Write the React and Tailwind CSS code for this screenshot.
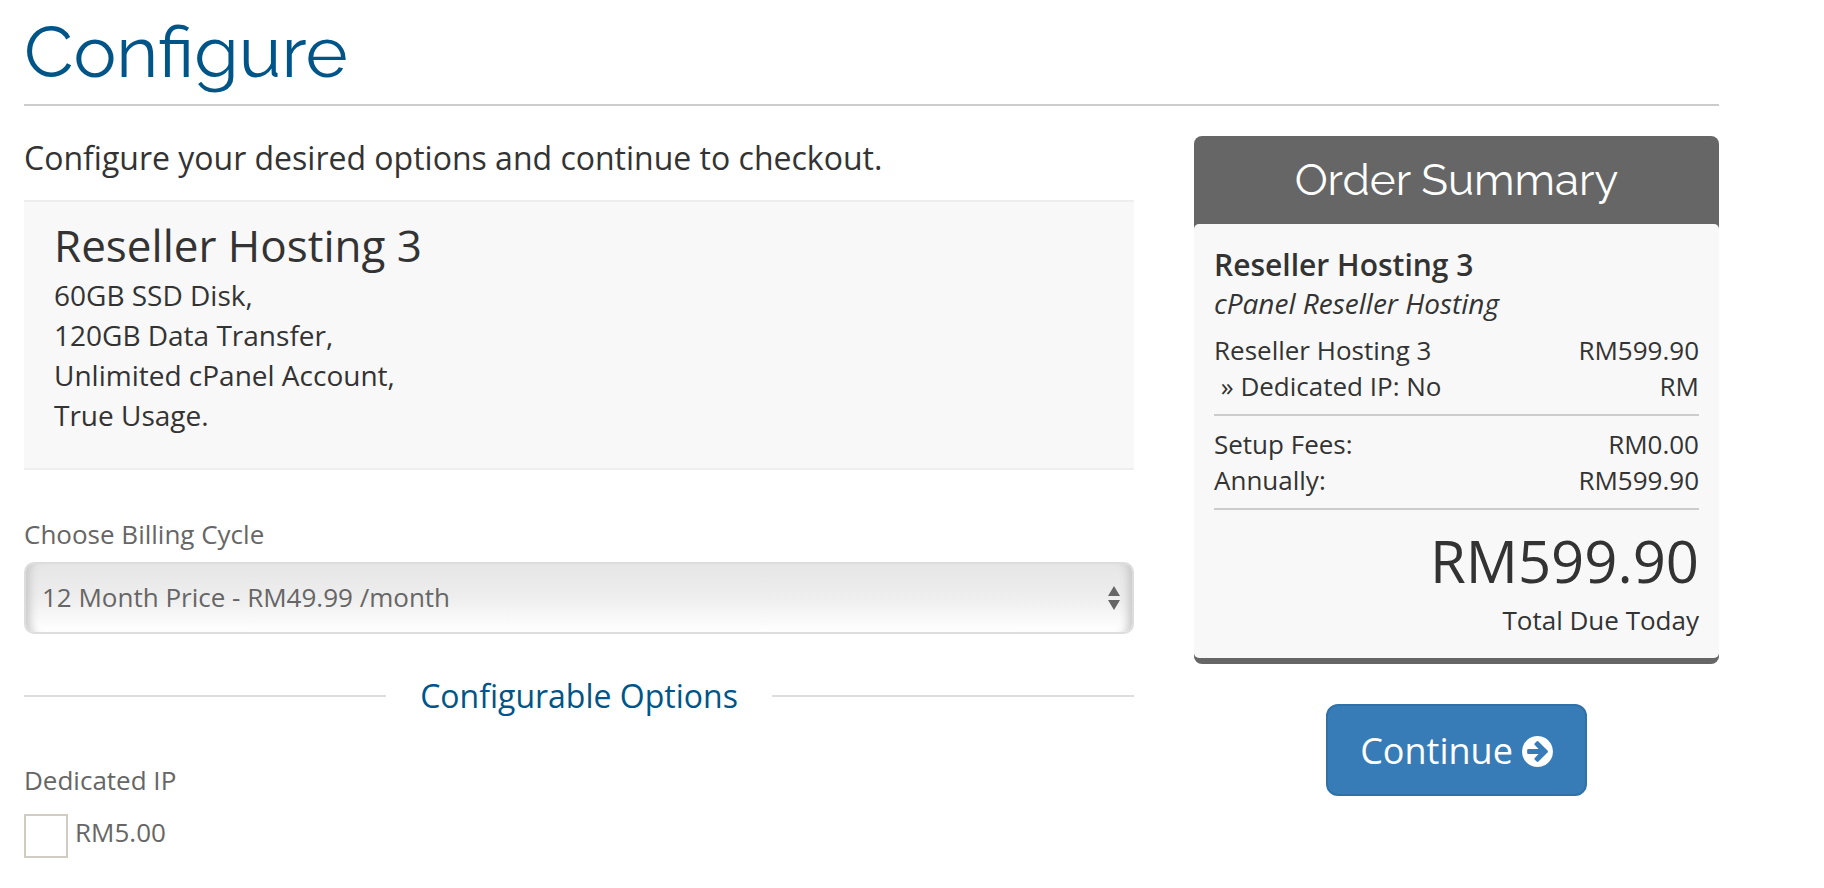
const features = ["60GB SSD Disk,", "120GB Data Transfer,", "Unlimited cPanel Account,", "True Usage."];

const items = [
  { label: "Reseller Hosting 3", price: "RM599.90" },
  { label: "\u00a0» Dedicated IP: No", price: "RM" },
];

const fees = [
  { label: "Setup Fees:", price: "RM0.00" },
  { label: "Annually:", price: "RM599.90" },
];

function ArrowCircle() {
  return (
    <svg viewBox="0 0 1536 1536" className="size-[31px] fill-current" fillRule="evenodd" aria-hidden="true">
      <path d="M1285 767q0-27-18-45l-91-91-362-362q-18-18-45-18t-45 18l-91 91q-18 18-18 45t18 45l189 189h-502q-26 0-45 19t-19 45v128q0 26 19 45t45 19h502l-189 189q-19 19-19 45t19 45l91 91q18 18 45 18t45-18l362-362 91-91q18-18 18-45zm251 1q0 209-103 385.500t-279.500 279.500-385.500 103-385.500-103-279.500-279.500-103-385.500 103-385.500 279.500-279.500 385.500-103 385.500 103 279.500 279.500 103 385.500z" />
    </svg>
  );
}

function PriceList({ rows }) {
  return (
    <dl className="border-b-2 border-[#ccc] py-[10px] text-[26px] leading-9">
      {rows.map((row) => (
        <div key={row.label} className="flex justify-between">
          <dt>{row.label}</dt>
          <dd>{row.price}</dd>
        </div>
      ))}
    </dl>
  );
}

function ProductForm() {
  return (
    <section>
      <p className="text-[32px] leading-[44px]">Configure your desired options and continue to checkout.</p>

      <div className="mt-5 border-y-2 border-[#eee] bg-[#f8f8f8] px-[30px] pt-[18px] pb-[33px]">
        <h2 className="text-[44px] leading-[50px]">Reseller Hosting 3</h2>
        <ul className="mt-[5px] text-[28px] leading-10">
          {features.map((feature) => (
            <li key={feature}>{feature}</li>
          ))}
        </ul>
      </div>

      <label htmlFor="cycle" className="mt-[46px] block text-[26px] leading-9 text-[#666]">
        Choose Billing Cycle
      </label>
      <div className="relative mt-[10px]">
        <select
          id="cycle"
          className="block h-[72px] w-full appearance-none rounded-[10px] border-2 border-[#ddd] bg-linear-to-b from-[#e6e6e6] via-[#eee] to-white pr-12 pb-[2px] pl-4 text-[26px] text-[#666] shadow-[inset_12px_0_8px_-8px_#c8c8c8,inset_-12px_0_8px_-8px_#c8c8c8]"
        >
          <option>12 Month Price - RM49.99 /month</option>
        </select>
        <svg viewBox="0 0 12 24" className="pointer-events-none absolute top-6 right-[14px] h-6 w-3 fill-[#666]" aria-hidden="true">
          <path d="M6 0 12 10H0ZM0 14H12L6 24Z" />
        </svg>
      </div>

      <div className="mt-10 flex items-center gap-[34px]">
        <span className="h-[2px] flex-1 bg-[#ddd]" />
        <h3 className="text-[32px] leading-[44px] text-[#058]">Configurable Options</h3>
        <span className="h-[2px] flex-1 bg-[#ddd]" />
      </div>

      <fieldset className="mt-11 text-[26px] leading-9 text-[#666]">
        <legend>Dedicated IP</legend>
        <label className="mt-4 flex items-start gap-[7px]">
          <input type="checkbox" className="size-11 appearance-none border-2 border-[#d0ccc4] bg-white checked:bg-[#337ab7]" />
          RM5.00
        </label>
      </fieldset>
    </section>
  );
}

function OrderSummary() {
  return (
    <aside>
      <div className="rounded-[8px] border-b-[6px] border-[#666] bg-[#666]">
        <h2 className="pt-4 pb-4 text-center font-['Raleway','Lato',sans-serif] text-[44px] leading-[56px] text-white">
          Order Summary
        </h2>
        <div className="rounded-[5px] bg-[#f8f8f8] px-5 pt-[21px] pb-5">
          <h3 className="text-[30px] leading-10 font-semibold">Reseller Hosting 3</h3>
          <p className="mb-px text-[28px] leading-9 italic">cPanel Reseller Hosting</p>
          <PriceList rows={items} />
          <PriceList rows={fees} />
          <div className="pt-[10px] text-right">
            <p className="text-[58px] leading-[82px]">RM599.90</p>
            <p className="text-[26px] leading-9">Total Due Today</p>
          </div>
        </div>
      </div>
      <div className="mt-10 text-center">
        <button
          type="button"
          className="inline-flex h-[92px] items-center gap-[9px] rounded-[12px] border-2 border-[#2f71a9] bg-[#377cb6] px-8 pt-[2px] text-[36px] text-white"
        >
          Continue
          <ArrowCircle />
        </button>
      </div>
    </aside>
  );
}

export default function App() {
  return (
    <main className="bg-white pt-3 pr-[105px] pb-[30px] pl-6 font-['Open_Sans',sans-serif] text-[#333]">
      <header className="border-b-2 border-[#ccc] pb-3">
        <h1 className="font-['Raleway','Lato',sans-serif] text-[72px] leading-[80px] text-[#058]">Configure</h1>
      </header>
      <div className="mt-[30px] grid grid-cols-[1110fr_525fr] gap-[60px]">
        <ProductForm />
        <OrderSummary />
      </div>
    </main>
  );
}
